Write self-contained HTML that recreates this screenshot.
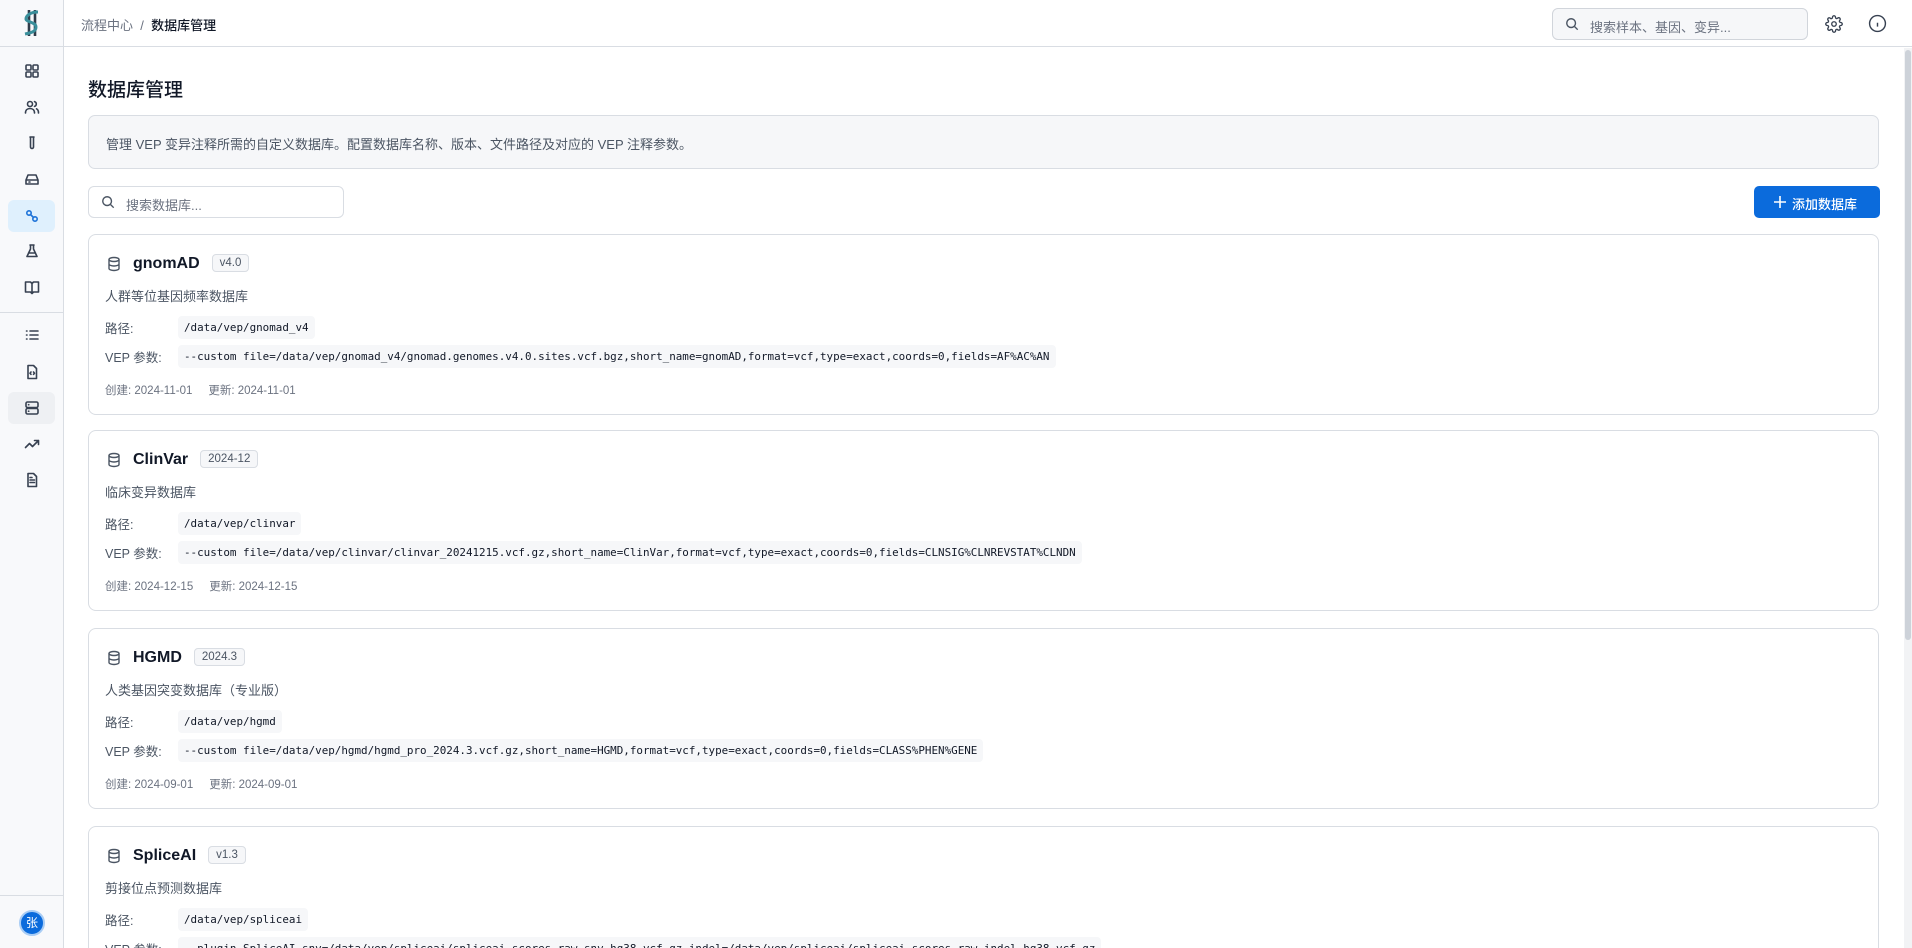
<!DOCTYPE html>
<html><head><meta charset="utf-8"><style>
*{box-sizing:border-box;margin:0;padding:0}
html,body{width:1912px;height:948px;overflow:hidden}
body{background:#fff;font-family:"Liberation Sans","Noto Sans CJK SC",sans-serif;color:#1f2937;position:relative}
.side{position:absolute;left:0;top:0;width:64px;height:948px;background:#f8f9fb;border-right:1px solid #d9dde3}
.logo{height:47px;border-bottom:1px solid #d9dde3;display:flex;align-items:center;justify-content:center}
.ic{position:absolute;left:8px;width:47px;height:32px;border-radius:6px;display:flex;align-items:center;justify-content:center}
.ic svg{width:16px;height:16px;fill:none;stroke:#374151;stroke-width:1.6;stroke-linecap:round;stroke-linejoin:round}
.hdr{position:absolute;left:64px;top:0;right:0;height:47px;border-bottom:1px solid #d9dde3;background:#fff}
.crumb{position:absolute;left:17px;top:15px;font-size:13px;color:#6b7280}
.crumb b{font-weight:500;color:#111827}
.gs{position:absolute;left:1488px;top:8px;width:256px;height:32px;border:1px solid #d1d5db;border-radius:6px;background:#f6f7f9;font-size:13px;color:#6b7280;padding:8px 0 0 37px}
.main{position:absolute;left:64px;top:48px;width:1840px;height:900px;overflow:hidden}
.scroll{position:absolute;left:1904px;top:48px;width:8px;height:900px;background:#f2f3f5}
.scroll div{position:absolute;left:1px;top:2px;width:6px;height:590px;background:#cdd2d9;border-radius:3px}
h1{position:absolute;left:24px;top:27px;font-size:19px;font-weight:500;color:#111827}
.info{position:absolute;left:24px;top:67px;width:1791px;height:54px;background:#f6f7f9;border:1px solid #d9dde3;border-radius:7px;font-size:13px;color:#4b5563;padding:18px 0 0 17px}
.srch{position:absolute;left:24px;top:138px;width:256px;height:32px;border:1px solid #d9dde3;border-radius:6px;font-size:13px;color:#6b7280;padding:8px 0 0 37px}
.btn{position:absolute;left:1690px;top:138px;width:126px;height:32px;background:#0b6bdc;border-radius:5px;color:#fff;font-size:13px;font-weight:500;padding:8px 0 0 38px}
.card{position:absolute;left:24px;width:1791px;height:181px;border:1px solid #d9dde3;border-radius:8px;background:#fff}
.t{position:absolute;left:44px;top:19px;font-size:16px;font-weight:bold;color:#111827}
.tag{display:inline-block;margin-left:12px;font-size:11.5px;font-weight:normal;color:#4b5563;border:1px solid #d9dde3;background:#f6f7f9;border-radius:4px;padding:2px 7px;vertical-align:2px}
.dbi{position:absolute;left:17px;top:21px;width:16px;height:16px}
.d{position:absolute;left:16px;top:51px;font-size:13px;color:#4b5563}
.row{position:absolute;left:16px;height:22px;display:flex;align-items:center;font-size:12.5px;color:#4b5563}
.row span{width:73px}
.row code{white-space:nowrap;font-family:"DejaVu Sans Mono","Liberation Mono",monospace;font-size:10.9px;color:#111827;background:#f6f7f9;border-radius:4px;padding:5px 6px}
.dt{position:absolute;left:16px;font-size:11.5px;color:#6b7280}
</style></head><body>
<div class="side">
<div class="logo"><svg width="22" height="30" viewBox="0 0 22 30"><path d="M8 2v26M14 2v26" stroke="#2f3c4a" stroke-width="2.6"/><path d="M17 4c-8 0-12 4-12 7s10 3 10 8-6 6-11 7" stroke="#3a8f9b" stroke-width="3" fill="none"/></svg></div>
<div class="ic" style="top:55px"><svg viewBox="0 0 16 16"><rect x="2" y="2" width="5" height="5" rx="1"/><rect x="9" y="2" width="5" height="5" rx="1"/><rect x="2" y="9" width="5" height="5" rx="1"/><rect x="9" y="9" width="5" height="5" rx="1"/></svg></div>
<div class="ic" style="top:91px"><svg viewBox="0 0 16 16"><circle cx="6" cy="5" r="2.5"/><path d="M1.5 14c0-3 2-4.5 4.5-4.5s4.5 1.5 4.5 4.5M10.5 2.6a2.5 2.5 0 010 4.8M12.5 9.8c1.3.6 2 2 2 4.2"/></svg></div>
<div class="ic" style="top:127px"><svg viewBox="0 0 16 16"><path d="M6 2h4M6.5 2v10a1.5 1.5 0 003 0V2"/></svg></div>
<div class="ic" style="top:163px"><svg viewBox="0 0 16 16"><path d="M2 9l2-5h8l2 5v4H2z M2 9h12M5 11h1"/></svg></div>
<div class="ic" style="top:200px;background:#dff0fd"><svg viewBox="0 0 16 16" style="stroke:#1e73d8"><circle cx="5" cy="5" r="2.2"/><circle cx="11" cy="11" r="2.2"/><path d="M6.5 6.5l3 3"/></svg></div>
<div class="ic" style="top:235px"><svg viewBox="0 0 16 16"><path d="M6 2h4M6.5 2v4L3 13.5h10L9.5 6V2M4.5 10h7"/></svg></div>
<div class="ic" style="top:271px"><svg viewBox="0 0 16 16"><path d="M1.5 3h5l1.5 1.5L9.5 3h5v10h-5L8 14.5 6.5 13h-5zM8 4.5v10"/></svg></div>
<div style="position:absolute;left:0;top:312px;width:63px;border-top:1px solid #d9dde3"></div>
<div class="ic" style="top:319px"><svg viewBox="0 0 16 16"><path d="M6 4h8M6 8h8M6 12h8M2.5 4h.5M2.5 8h.5M2.5 12h.5"/></svg></div>
<div class="ic" style="top:356px"><svg viewBox="0 0 16 16"><path d="M4 1.5h5.5l3 3v10H4z M7 8l-1 1.2 1 1.2M9.5 8l1 1.2-1 1.2"/></svg></div>
<div class="ic" style="top:392px;background:#eef0f3"><svg viewBox="0 0 16 16"><rect x="2" y="2" width="12" height="5.5" rx="1.5"/><rect x="2" y="8.5" width="12" height="5.5" rx="1.5"/><path d="M4.5 4.7h.3M4.5 11.2h.3"/></svg></div>
<div class="ic" style="top:428px"><svg viewBox="0 0 16 16"><path d="M1.5 11.5l4-4 3 3 6-6M10.5 4.5h4v4"/></svg></div>
<div class="ic" style="top:464px"><svg viewBox="0 0 16 16"><path d="M4 1.5h5.5l3 3v10H4z M6 8h4.5M6 10.5h4.5M6 5.5h2"/></svg></div>
<div style="position:absolute;left:0;top:895px;width:63px;border-top:1px solid #d9dde3"></div>
<div style="position:absolute;left:19px;top:910px;width:26px;height:26px;border-radius:50%;background:#0b6bdc;border:2px solid #a9cdf5;color:#fff;font-size:12px;text-align:center;line-height:22px">张</div>
</div>
<div class="hdr">
<div class="crumb">流程中心 &nbsp;/&nbsp; <b>数据库管理</b></div>
<div class="gs"><svg style="position:absolute;left:12px;top:8px" width="14" height="14" viewBox="0 0 16 16" fill="none" stroke="#4b5563" stroke-width="1.6"><circle cx="7" cy="7" r="5"/><path d="M11 11l3.5 3.5"/></svg>搜索样本、基因、变异...</div>
<svg style="position:absolute;left:1761px;top:15px" width="18" height="18" viewBox="0 0 24 24" fill="none" stroke="#374151" stroke-width="1.8"><circle cx="12" cy="12" r="3"/><path d="M19.4 15a1.65 1.65 0 00.33 1.82l.06.06a2 2 0 11-2.83 2.83l-.06-.06a1.65 1.65 0 00-1.82-.33 1.65 1.65 0 00-1 1.51V21a2 2 0 11-4 0v-.09A1.65 1.65 0 009 19.4a1.65 1.65 0 00-1.82.33l-.06.06a2 2 0 11-2.83-2.83l.06-.06A1.65 1.65 0 004.68 15a1.65 1.65 0 00-1.51-1H3a2 2 0 110-4h.09A1.65 1.65 0 004.6 9a1.65 1.65 0 00-.33-1.82l-.06-.06a2 2 0 112.83-2.83l.06.06A1.65 1.65 0 009 4.68a1.65 1.65 0 001-1.51V3a2 2 0 114 0v.09a1.65 1.65 0 001 1.51 1.65 1.65 0 001.82-.33l.06-.06a2 2 0 112.83 2.83l-.06.06A1.65 1.65 0 0019.4 9a1.65 1.65 0 001.51 1H21a2 2 0 110 4h-.09a1.65 1.65 0 00-1.51 1z"/></svg>
<svg style="position:absolute;left:1804px;top:14px" width="19" height="19" viewBox="0 0 24 24" fill="none" stroke="#374151" stroke-width="1.8"><circle cx="12" cy="12" r="10"/><path d="M12 16v-5M12 8h.01"/></svg>
</div>
<div class="main">
<h1>数据库管理</h1>
<div class="info">管理 VEP 变异注释所需的自定义数据库。配置数据库名称、版本、文件路径及对应的 VEP 注释参数。</div>
<div class="srch"><svg style="position:absolute;left:12px;top:8px" width="14" height="14" viewBox="0 0 16 16" fill="none" stroke="#4b5563" stroke-width="1.6"><circle cx="7" cy="7" r="5"/><path d="M11 11l3.5 3.5"/></svg>搜索数据库...</div>
<div class="btn"><svg style="position:absolute;left:20px;top:10px" width="12" height="12" viewBox="0 0 12 12" stroke="#fff" stroke-width="1.6"><path d="M6 0v12M0 6h12"/></svg>添加数据库</div>

<div class="card" style="top:186px">
<svg class="dbi" viewBox="0 0 16 16" fill="none" stroke="#4b5563" stroke-width="1.4"><ellipse cx="8" cy="3.5" rx="5" ry="2"/><path d="M3 3.5v9c0 1.1 2.2 2 5 2s5-.9 5-2v-9M3 8c0 1.1 2.2 2 5 2s5-.9 5-2"/></svg>
<div class="t">gnomAD<span class="tag">v4.0</span></div>
<div class="d">人群等位基因频率数据库</div>
<div class="row" style="top:81px"><span>路径:</span><code>/data/vep/gnomad_v4</code></div>
<div class="row" style="top:110px"><span>VEP 参数:</span><code>--custom file=/data/vep/gnomad_v4/gnomad.genomes.v4.0.sites.vcf.bgz,short_name=gnomAD,format=vcf,type=exact,coords=0,fields=AF%AC%AN</code></div>
<div class="dt" style="top:147px">创建: 2024-11-01 &nbsp;&nbsp;&nbsp; 更新: 2024-11-01</div>
</div>

<div class="card" style="top:382px">
<svg class="dbi" viewBox="0 0 16 16" fill="none" stroke="#4b5563" stroke-width="1.4"><ellipse cx="8" cy="3.5" rx="5" ry="2"/><path d="M3 3.5v9c0 1.1 2.2 2 5 2s5-.9 5-2v-9M3 8c0 1.1 2.2 2 5 2s5-.9 5-2"/></svg>
<div class="t">ClinVar<span class="tag">2024-12</span></div>
<div class="d">临床变异数据库</div>
<div class="row" style="top:81px"><span>路径:</span><code>/data/vep/clinvar</code></div>
<div class="row" style="top:110px"><span>VEP 参数:</span><code>--custom file=/data/vep/clinvar/clinvar_20241215.vcf.gz,short_name=ClinVar,format=vcf,type=exact,coords=0,fields=CLNSIG%CLNREVSTAT%CLNDN</code></div>
<div class="dt" style="top:147px">创建: 2024-12-15 &nbsp;&nbsp;&nbsp; 更新: 2024-12-15</div>
</div>

<div class="card" style="top:580px">
<svg class="dbi" viewBox="0 0 16 16" fill="none" stroke="#4b5563" stroke-width="1.4"><ellipse cx="8" cy="3.5" rx="5" ry="2"/><path d="M3 3.5v9c0 1.1 2.2 2 5 2s5-.9 5-2v-9M3 8c0 1.1 2.2 2 5 2s5-.9 5-2"/></svg>
<div class="t">HGMD<span class="tag">2024.3</span></div>
<div class="d">人类基因突变数据库（专业版）</div>
<div class="row" style="top:81px"><span>路径:</span><code>/data/vep/hgmd</code></div>
<div class="row" style="top:110px"><span>VEP 参数:</span><code>--custom file=/data/vep/hgmd/hgmd_pro_2024.3.vcf.gz,short_name=HGMD,format=vcf,type=exact,coords=0,fields=CLASS%PHEN%GENE</code></div>
<div class="dt" style="top:147px">创建: 2024-09-01 &nbsp;&nbsp;&nbsp; 更新: 2024-09-01</div>
</div>

<div class="card" style="top:778px">
<svg class="dbi" viewBox="0 0 16 16" fill="none" stroke="#4b5563" stroke-width="1.4"><ellipse cx="8" cy="3.5" rx="5" ry="2"/><path d="M3 3.5v9c0 1.1 2.2 2 5 2s5-.9 5-2v-9M3 8c0 1.1 2.2 2 5 2s5-.9 5-2"/></svg>
<div class="t">SpliceAI<span class="tag">v1.3</span></div>
<div class="d">剪接位点预测数据库</div>
<div class="row" style="top:81px"><span>路径:</span><code>/data/vep/spliceai</code></div>
<div class="row" style="top:110px"><span>VEP 参数:</span><code>--plugin SpliceAI,snv=/data/vep/spliceai/spliceai_scores.raw.snv.hg38.vcf.gz,indel=/data/vep/spliceai/spliceai_scores.raw.indel.hg38.vcf.gz</code></div>
</div>
</div>
<div class="scroll"><div></div></div>
</body></html>
